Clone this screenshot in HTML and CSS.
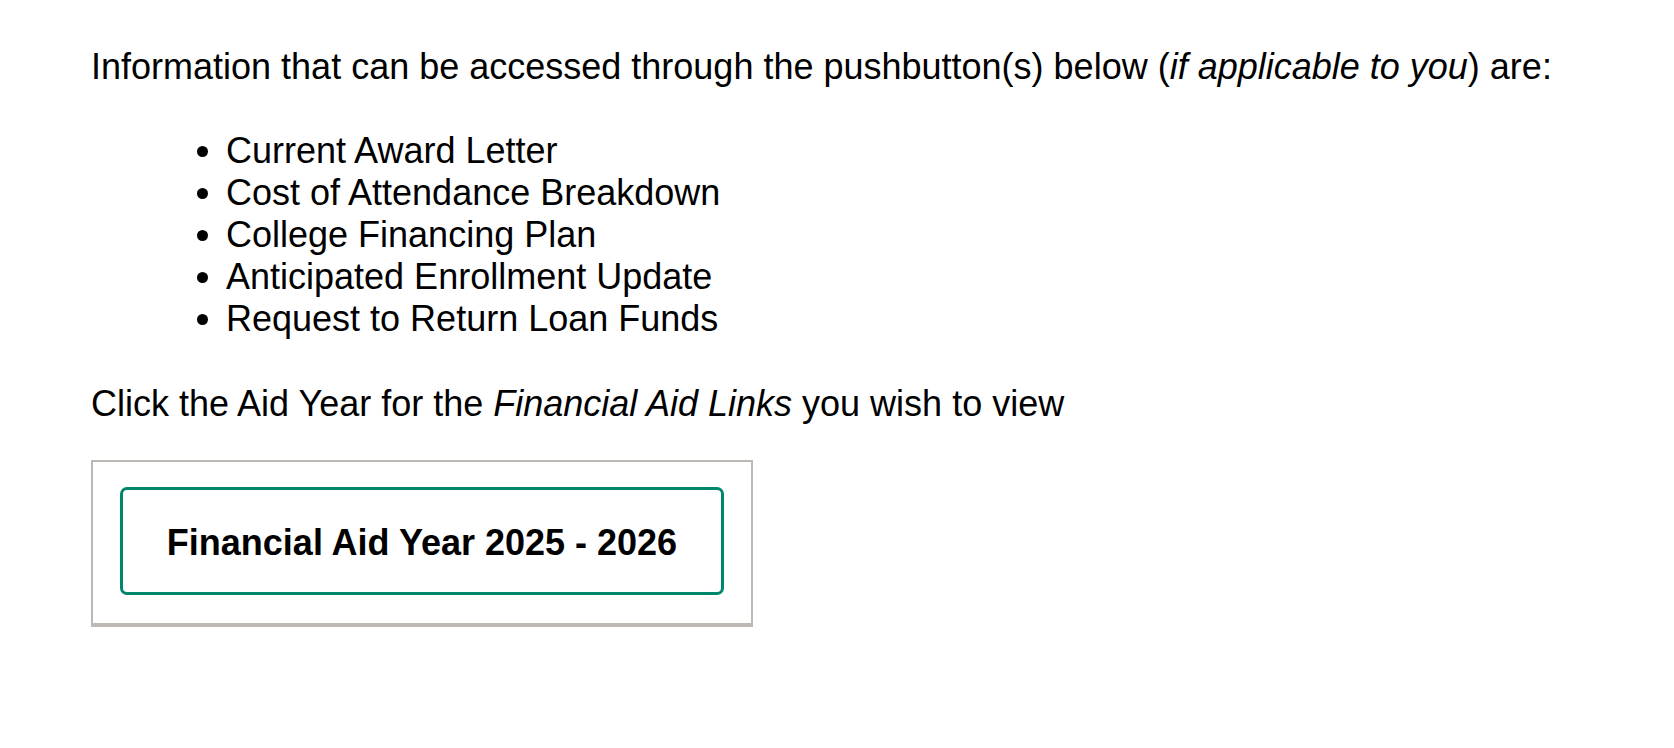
FILE: index.html
```html
<!DOCTYPE html>
<html lang="en">
<head>
<meta charset="utf-8">
<title>Financial Aid</title>
<link rel="stylesheet" href="styles.css">
</head>
<body>
<main class="content">
  <p class="intro">Information that can be accessed through the pushbutton(s) below (<em>if applicable to you</em>) are:</p>
  <ul class="items">
    <li>Current Award Letter</li>
    <li>Cost of Attendance Breakdown</li>
    <li>College Financing Plan</li>
    <li>Anticipated Enrollment Update</li>
    <li>Request to Return Loan Funds</li>
  </ul>
  <p class="click">Click the Aid Year for the <em>Financial Aid Links</em> you wish to view</p>
  <div class="panel">
    <button class="year-btn" type="button">Financial Aid Year 2025 - 2026</button>
  </div>
</main>
</body>
</html>
```
FILE: styles.css
```css
html, body {
  margin: 0;
  padding: 0;
  background: #ffffff;
}
body {
  font-family: "Liberation Sans", Arial, sans-serif;
  font-size: 36px;
  color: #000;
}
.content {
  padding: 46px 0 0 91px;
}
.intro {
  margin: 0;
  line-height: 41.5px;
}
.items {
  margin: 42px 0 0 0;
  padding-left: 135px;
  line-height: 42px;
}
.click {
  margin: 43px 0 0 0;
  line-height: 42px;
}
.panel {
  display: inline-block;
  margin-top: 35px;
  border: 2px solid #bdb8b2;
  border-bottom-width: 4px;
  padding: 25px 27px 28px 27px;
}
.year-btn {
  display: block;
  width: 604px;
  height: 108px;
  border: 3px solid #00866a;
  border-radius: 7px;
  background: #fff;
  color: #000;
  font-family: "Liberation Sans", Arial, sans-serif;
  font-weight: bold;
  font-size: 36px;
  padding: 5px 0 0 0;
}
```
